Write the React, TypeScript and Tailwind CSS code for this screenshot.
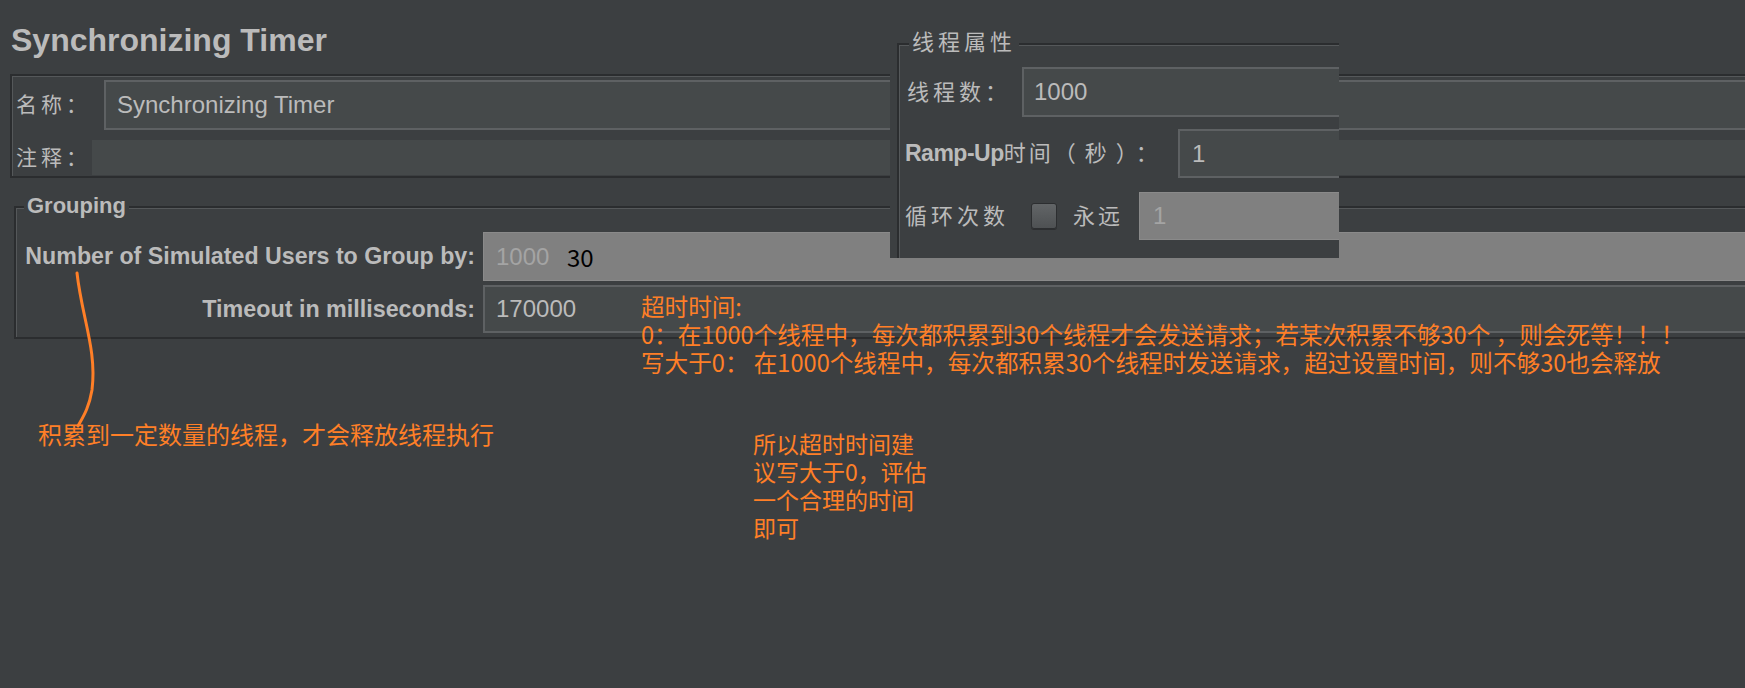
import React from 'react';

const ui = "font-['Liberation_Sans','Noto_Sans_CJK_SC',sans-serif]";
const note = "font-['Noto_Sans_CJK_SC','Noto_Sans',sans-serif] text-[#ff7f27]";

export default function App() {
  return (
    <div className={`relative h-[688px] w-full overflow-hidden bg-[#3c3f41] text-[#bbbbbb] ${ui}`}>
      <h1 className="pl-[11px] pt-[22px] text-[32px] font-bold leading-[37px]">Synchronizing Timer</h1>

      {/* name / comment */}
      <div className="mr-[-20px] ml-[10px] mt-[15px] border-2 border-[#2b2d2f] pb-[1px] shadow-[inset_1px_1px_0_#55585a]">
        <div className="flex items-center pl-[4px] pt-[4px]">
          <span className="w-[88px] text-[21px] tracking-[4px]">名称：</span>
          <div className="flex h-[50px] flex-1 items-center border-2 border-[#5e6163] bg-[#45494a] pl-[11px] text-[24px]">
            Synchronizing Timer
          </div>
        </div>
        <div className="mt-[10px] flex items-center pl-[4px]">
          <span className="w-[76px] text-[21px] tracking-[4px]">注释：</span>
          <div className="h-[35px] flex-1 bg-[#45494a]" />
        </div>
      </div>

      {/* grouping */}
      <div className="relative mr-[-20px] ml-[14px] mt-[28px] border-2 border-[#2b2d2f] pb-[4px] pt-[24px] shadow-[inset_1px_1px_0_#55585a]">
        <span className="absolute -top-[15px] left-[8px] bg-[#3c3f41] px-[3px] text-[22px] font-bold leading-[26px]">Grouping</span>
        <div className="grid grid-cols-[459px_1fr] gap-x-[8px] gap-y-[4px]">
          <div className="flex h-[49px] items-center justify-end text-[23.2px] font-bold">Number of Simulated Users to Group by:</div>
          <div className="flex h-[49px] items-center border border-[#8a8a8a] bg-[#808080] pl-[12px] text-[24px] text-[#a4a4a4]">1000</div>
          <div className="flex h-[48px] items-center justify-end text-[23.3px] font-bold">Timeout in milliseconds:</div>
          <div className="flex h-[48px] items-center border-2 border-[#5e6163] bg-[#45494a] pl-[11px] text-[24px]">170000</div>
        </div>
      </div>

      {/* pasted thread group panel */}
      <div className="absolute left-[890px] top-[24px] h-[234px] w-[449px] overflow-hidden bg-[#3c3f41] pl-[7px] pt-[19px]">
        <div className="relative h-full border-l-2 border-t-2 border-[#2b2d2f] shadow-[inset_1px_1px_0_#55585a]">
          <span className="absolute -top-[15px] left-[10px] bg-[#3c3f41] px-[3px] text-[22px] leading-[26px] tracking-[4px]">线程属性</span>
          <div className="flex items-center pl-[8px] pt-[22px]">
            <span className="w-[115px] text-[22px] tracking-[4px]">线程数：</span>
            <div className="mr-[-10px] flex h-[50px] flex-1 items-center border-2 border-[#5e6163] bg-[#45494a] pl-[10px] text-[24px]">1000</div>
          </div>
          <div className="mt-[12px] flex items-center pl-[6px]">
            <span className="w-[273px] whitespace-nowrap text-[22px]">
              <b className="text-[23px] tracking-[-0.5px]">Ramp-Up</b>
              <span className="tracking-[3px]">时间</span>
              <span className="tracking-[9px]">（秒）：</span>
            </span>
            <div className="mr-[-10px] flex h-[49px] flex-1 items-center border-2 border-[#5e6163] bg-[#45494a] pl-[12px] text-[24px]">1</div>
          </div>
          <div className="mt-[14px] flex items-center pl-[6px]">
            <span className="w-[126px] text-[22px] tracking-[4px]">循环次数</span>
            <span className="h-[26px] w-[26px] rounded-[3px] border border-[#2c2e30] bg-gradient-to-b from-[#626567] to-[#4e5153] shadow-[0_1px_0_#2c2e30]" />
            <span className="ml-[16px] w-[66px] text-[22px] tracking-[3px]">永远</span>
            <div className="mr-[-10px] flex h-[48px] flex-1 items-center border border-[#8a8a8a] bg-[#808080] pl-[13px] text-[24px] text-[#a4a4a4]">1</div>
          </div>
        </div>
      </div>

      {/* annotations */}
      <svg className="pointer-events-none absolute left-0 top-0" width="1745" height="688" viewBox="0 0 1745 688">
        <path d="M77 273 C 82 318, 97 350, 92 390 C 89 408, 83 417, 78 426" fill="none" stroke="#ff7f27" strokeWidth="3" strokeLinecap="round" />
      </svg>
      <div className="absolute left-[567px] top-[245px] font-['Noto_Sans_CJK_SC','Noto_Sans',sans-serif] text-[24px] leading-[24px] text-black">30</div>
      <div className={`absolute left-[38px] top-[422px] whitespace-nowrap text-[24px] leading-[24px] ${note}`}>
        积累到一定数量的线程，才会释放线程执行
      </div>
      <div className={`absolute left-[641px] top-[292px] whitespace-nowrap text-[23.6px] leading-[28px] ${note}`}>
        <div>超时时间:</div>
        <div>0：在1000个线程中，每次都积累到30个线程才会发送请求；若某次积累不够30个 ，则会死等！！！</div>
        <div>写大于0： 在1000个线程中，每次都积累30个线程时发送请求，超过设置时间，则不够30也会释放</div>
      </div>
      <div className={`absolute left-[753px] top-[429px] whitespace-nowrap text-[23px] leading-[28px] ${note}`}>
        <div>所以超时时间建</div>
        <div>议写大于0，评估</div>
        <div>一个合理的时间</div>
        <div>即可</div>
      </div>
    </div>
  );
}
